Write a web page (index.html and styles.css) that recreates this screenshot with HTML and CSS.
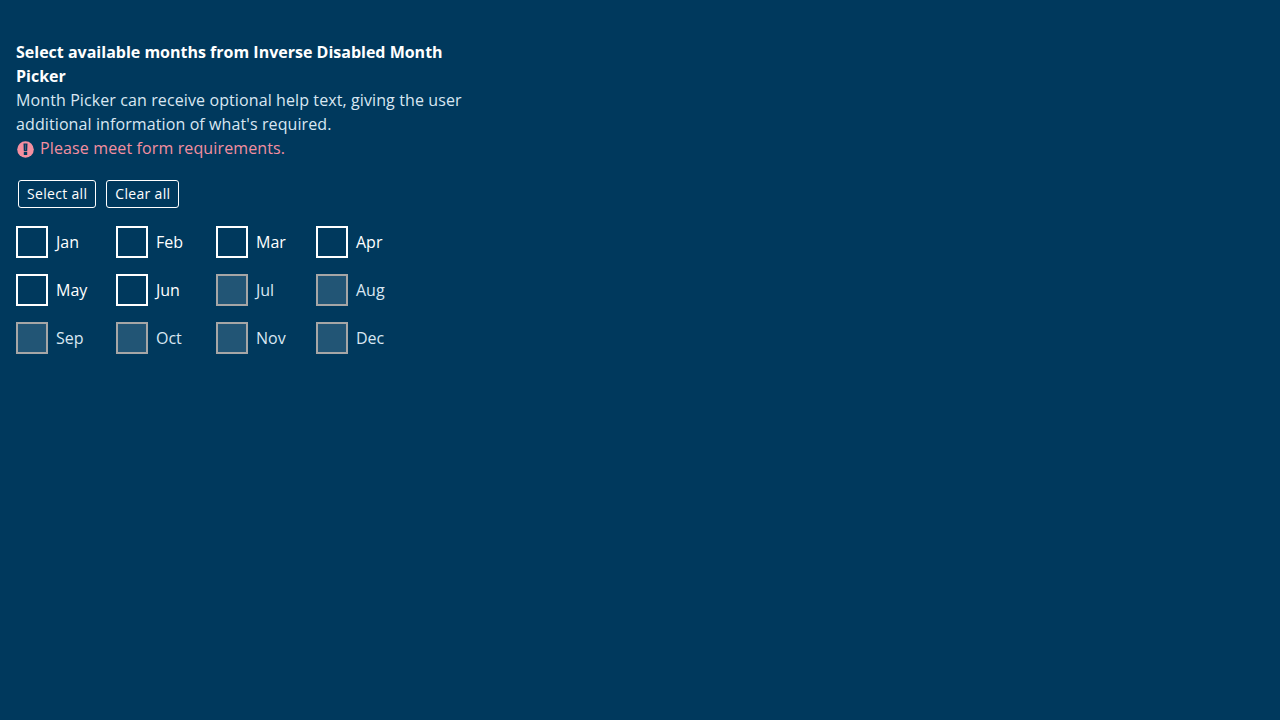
FILE: index.html
```html
<!DOCTYPE html>
<html lang="en">
<head>
<meta charset="utf-8">
<title>Month Picker</title>
<link rel="stylesheet" href="styles.css">
</head>
<body>
<fieldset class="picker">
<legend class="picker-label">Select available months from Inverse Disabled Month Picker</legend>
<div class="hint">Month Picker can receive optional help text, giving the user additional information of what's required.</div>
<div class="error"><svg class="error-icon" viewBox="0 0 17 17" aria-hidden="true"><circle cx="8.500" cy="8.500" r="8.300" fill="currentColor"/><path class="error-mark" d="M6.500 2.500h4l-.3 7.700H6.800z"/><path class="error-core" d="M8 3.500h1v5.500H8z"/><path class="error-mark" d="M6.800 11h3.400v3H6.800z"/></svg><span>Please meet form requirements.</span></div>
<div class="buttons"><button type="button" class="button">Select all</button><button type="button" class="button">Clear all</button></div>
<div class="months">
<label class="month"><input type="checkbox" class="box"><span>Jan</span></label>
<label class="month"><input type="checkbox" class="box"><span>Feb</span></label>
<label class="month"><input type="checkbox" class="box"><span>Mar</span></label>
<label class="month"><input type="checkbox" class="box"><span>Apr</span></label>
<label class="month"><input type="checkbox" class="box"><span>May</span></label>
<label class="month"><input type="checkbox" class="box"><span>Jun</span></label>
<label class="month disabled"><input type="checkbox" class="box" disabled><span>Jul</span></label>
<label class="month disabled"><input type="checkbox" class="box" disabled><span>Aug</span></label>
<label class="month disabled"><input type="checkbox" class="box" disabled><span>Sep</span></label>
<label class="month disabled"><input type="checkbox" class="box" disabled><span>Oct</span></label>
<label class="month disabled"><input type="checkbox" class="box" disabled><span>Nov</span></label>
<label class="month disabled"><input type="checkbox" class="box" disabled><span>Dec</span></label>
</div>
</fieldset>
</body>
</html>
```
FILE: styles.css
```css
* { box-sizing: border-box; }
body {
  margin: 0;
  padding: 40px 16px;
  background: #00395d;
  color: #fff;
  font: 16px/24px "Open Sans", sans-serif;
}
.picker { width: 460px; margin: 0; padding: 0; border: 0; }
.picker-label { padding: 0; font-weight: 700; }
.hint { color: #d9e7f2; letter-spacing: .105px; }
.error { display: flex; color: #f48fa0; letter-spacing: .13px; }
.error-icon { width: 17px; height: 17px; margin: 5px 6px 0 1px; }
.error-mark { fill: #00395d; }
.error-core { fill: #4f5875; }
.buttons { display: flex; gap: 10px; margin: 20px 2px 18px; }
.button {
  height: 28px;
  padding: 0 8px;
  border: 1px solid #fff;
  border-radius: 3px;
  background: transparent;
  color: #fff;
  font: 14px/26px "Open Sans", sans-serif;
  letter-spacing: .32px;
}
.months { display: grid; grid-template-columns: repeat(4, 100px); row-gap: 16px; }
.month { display: flex; align-items: center; gap: 8px; height: 32px; }
.box {
  appearance: none;
  width: 32px;
  height: 32px;
  margin: 0;
  border: 2px solid #fff;
}
.disabled { color: #d9e7f2; }
.disabled .box { border-color: #a6a6a6; background: #225575; }
```
